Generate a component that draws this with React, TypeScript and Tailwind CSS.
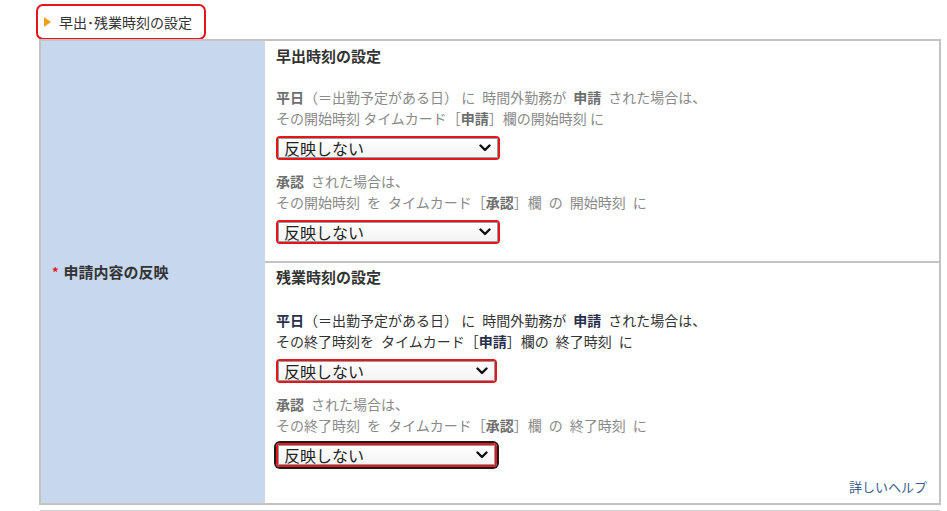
import React from "react";

const jp = { fontFamily: '"Noto Sans CJK JP", "Noto Sans", sans-serif' };

function FakeSelect({ focused = false, width = "w-[224px]" }: { focused?: boolean; width?: string }) {
    return (
        <div
            className={`${width} h-[24px] rounded-[4px] border-2 border-[#e8141b] ${focused ? "ring-2 ring-[#1a1a1a]" : ""}`}
        >
            <div className="h-full flex items-center justify-between border border-[#9a9a9a] bg-gradient-to-b from-white to-[#f3f3f3] pl-[5px] pr-[6px]">
                <span className="text-[16px] leading-none text-[#222]">反映しない</span>
                <svg width="12" height="8" viewBox="0 0 12 8" fill="none">
                    <path d="M1.5 1.5 L6 6 L10.5 1.5" stroke="#111" strokeWidth="2.4" strokeLinecap="round" strokeLinejoin="round" />
                </svg>
            </div>
        </div>
    );
}

function Section({
    title,
    dark,
    lineB,
    lineD,
    topGap,
}: {
    title: string;
    dark: boolean;
    lineB: React.ReactNode;
    lineD: React.ReactNode;
    topGap: string;
}) {
    const first = dark ? "text-[#333]" : "text-[#8a8a8a]";
    const firstBold = dark ? "font-bold text-[#2a2f4a]" : "font-bold text-[#6d6d6d]";
    return (
        <div>
            <div className="text-[15px] leading-[20px] font-bold text-[#333]">{title}</div>
            <div className={`${topGap} text-[14px] leading-[21px] ${first}`}>
                <div>
                    <span className={firstBold}>平日</span>（＝出勤予定がある日） に{"\u2002"}時間外勤務が{"\u2002"}<span className={firstBold}>申請</span>{"\u2002"}された場合は、
                </div>
                <div>{lineB}</div>
            </div>
            <div className="mt-[7px]">
                <FakeSelect width={dark ? "w-[221px]" : "w-[224px]"} />
            </div>
            <div className="mt-[11px] text-[14px] leading-[21px] text-[#8a8a8a]">
                <div>
                    <span className="font-bold text-[#6d6d6d]">承認</span>{"\u2002"}された場合は、
                </div>
                <div>{lineD}</div>
            </div>
        </div>
    );
}

export default function App() {
    return (
        <div className="w-[947px] h-[511px] bg-white pl-[36px] pt-[4px]" style={jp}>
            <div className="w-[170px] h-[36px] rounded-[7px] border-2 border-[#e8141b] flex items-center pl-[6px] gap-[8px]">
                <svg width="7" height="10" viewBox="0 0 7 10">
                    <path d="M0 0 L7 5 L0 10 Z" fill="#f0a020" />
                </svg>
                <span className="text-[14px] text-[#333]">早出･残業時刻の設定</span>
            </div>

            <div className="ml-[3px] -mt-[1px] w-[902px] border-2 border-[#c3c3c3] flex">
                <div className="w-[224px] bg-[#c7d8ee] flex items-center pl-[11px]">
                    <span className="text-[#e8141b] text-[13px] font-bold mr-[5px]">*</span>
                    <span className="text-[15px] font-bold text-[#333]">申請内容の反映</span>
                </div>
                <div className="flex-1 flex flex-col">
                    <div className="pl-[11px] pt-[5px] pb-[17px] border-b-2 border-[#c3c3c3]">
                        <Section
                            title="早出時刻の設定"
                            dark={false}
                            topGap="mt-[21px]"
                            lineB={
                                <>
                                    その開始時刻 タイムカード［<span className="font-bold text-[#6d6d6d]">申請</span>］欄の開始時刻 に
                                </>
                            }
                            lineD={
                                <>
                                    その開始時刻{"\u2002"}を{"\u2002"}タイムカード［<span className="font-bold text-[#6d6d6d]">承認</span>］欄{"\u2002"}の{"\u2002"}開始時刻{"\u2002"}に
                                </>
                            }
                        />
                        <div className="mt-[7px]">
                            <FakeSelect />
                        </div>
                    </div>
                    <div className="pl-[11px] pt-[4px] pr-[12px]">
                        <Section
                            title="残業時刻の設定"
                            dark={true}
                            topGap="mt-[23px]"
                            lineB={
                                <>
                                    その終了時刻を{"\u2002"}タイムカード［<span className="font-bold text-[#2a2f4a]">申請</span>］欄の{"\u2002"}終了時刻{"\u2002"}に
                                </>
                            }
                            lineD={
                                <>
                                    その終了時刻{"\u2002"}を{"\u2002"}タイムカード［<span className="font-bold text-[#6d6d6d]">承認</span>］欄{"\u2002"}の{"\u2002"}終了時刻{"\u2002"}に
                                </>
                            }
                        />
                        <div className="mt-[7px]">
                            <FakeSelect focused width="w-[221px]" />
                        </div>
                        <div className="flex justify-end mt-[10px] pb-[6px]">
                            <span className="text-[13px] leading-[20px] text-[#3d5d93]">詳しいヘルプ</span>
                        </div>
                    </div>
                </div>
            </div>
            <div className="ml-[4px] mt-[5px] w-[900px] border-t-2 border-[#cfcfcf]" />
        </div>
    );
}
